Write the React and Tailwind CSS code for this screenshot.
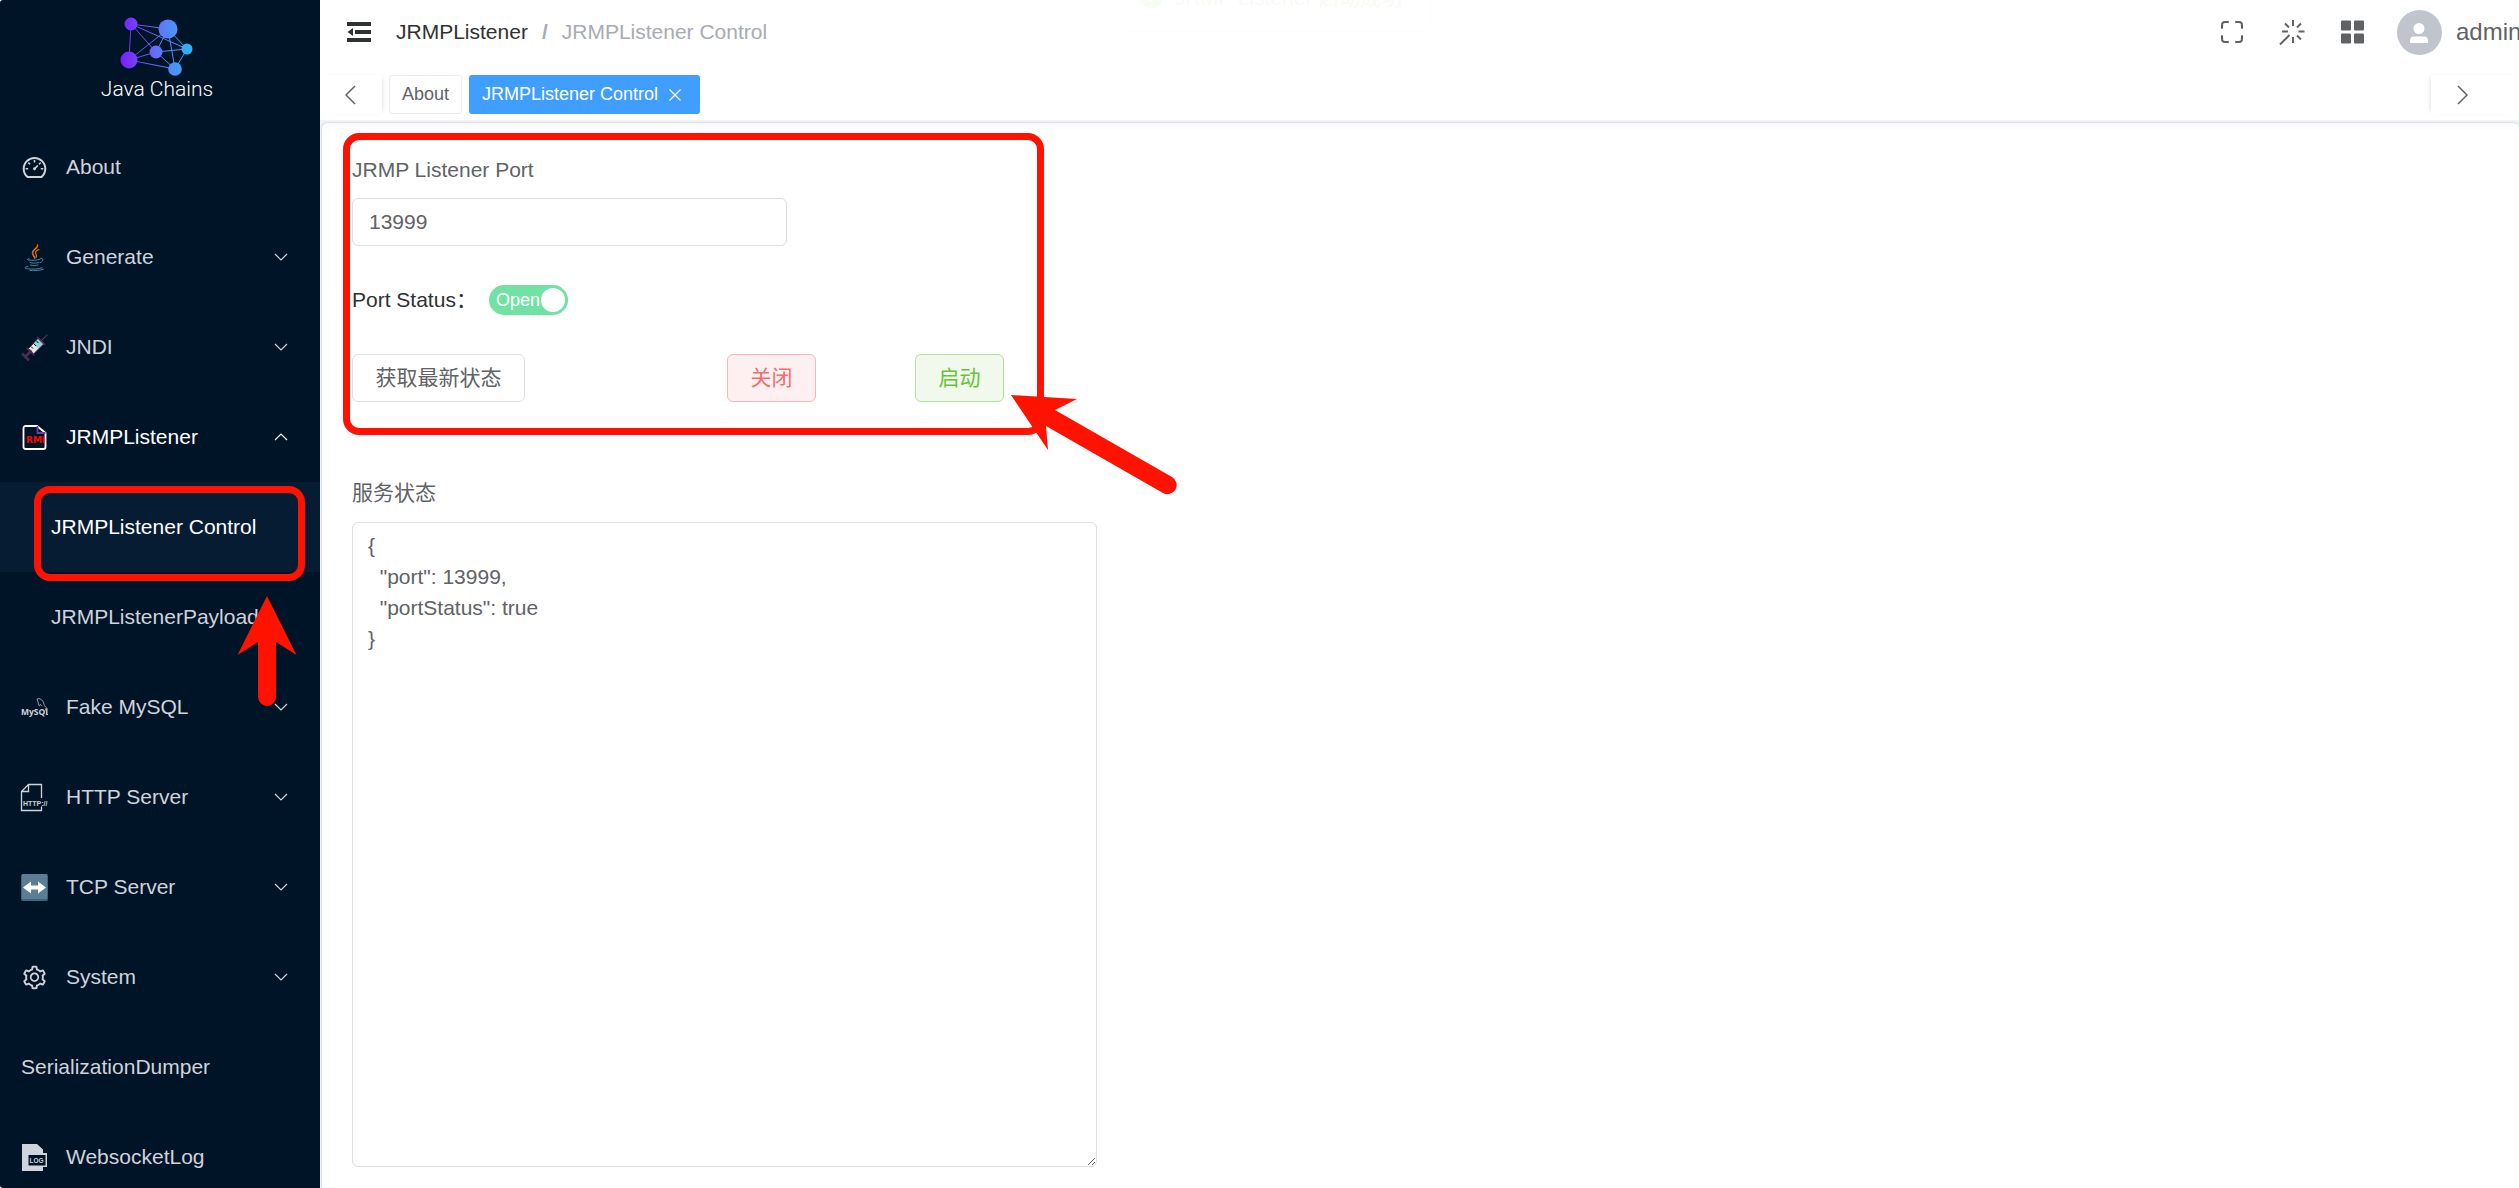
import { useState } from 'react';
import { AiOutlineDashboard, AiOutlineSetting } from 'react-icons/ai';

const JavaIcon = () => (
  <svg viewBox="0 0 27 27" className="h-[27px] w-[27px]" fill="none" strokeLinecap="round">
    <path d="M16.5 1c.8 3-5 4.600-5 8 0 2 1.800 3 2.300 5" stroke="#e76f00" strokeWidth="1.500" />
    <path d="M18 5.500c-2.500 1-3.800 2.300-3.300 4 .5 1.400 1.300 2.300.3 4" stroke="#e76f00" strokeWidth="1.200" />
    <path d="M8 14.500c-2 .6-2.500 1.300 0 1.600 3.500.4 8 .2 11-.8M19.500 14.300c3-.6 3.800 2.500-.3 4.300M9 18.500c2.500.9 6 .8 9 0M9.500 21c2.500.8 5 .7 7.500 0M7 22.500c-3.500.6-4.500 1.800-.5 2.300 5 .6 11.500.4 14.500-1M9 26.500c5 .4 10 0 13.500-1.300" stroke="#5382a1" strokeWidth="1" />
  </svg>
);

const SyringeIcon = () => (
  <svg viewBox="0 0 27 27" className="h-[27px] w-[27px]" fill="none">
    <path d="M20 7l6.500-6.500" stroke="#4b2f52" strokeWidth="1.200" />
    <path d="M7.500 14.500L17.500 4l5.500 5.500-10.500 10.500z" fill="#e8e6ea" stroke="#4b2f52" />
    <path d="M12.500 10L18 4.500l4.500 4.500-5.500 5.500z" fill="#8fd3d6" />
    <path d="M10 12.500l2 2M12.500 9.500l2.500 2.500M15.500 7l2 2" stroke="#001427" />
    <path d="M10.500 16.500l-7 7M1 19.500l7 7" stroke="#4b2f52" strokeWidth="2.500" />
    <path d="M5.500 14l8 7.500M16 3l8 8" stroke="#4b2f52" strokeWidth="1.500" />
  </svg>
);

const RmiIcon = () => (
  <svg viewBox="0 0 27 27" className="h-[27px] w-[27px]" fill="none">
    <path d="M4.500 2h11.500l8.500 7v14a2 2 0 0 1-2 2h-18a2 2 0 0 1-2-2v-19a2 2 0 0 1 2-2z" stroke="#fff" strokeWidth="1.800" />
    <path d="M16.500 2v7h8" stroke="#6b3fa0" strokeWidth="1.800" />
    <text x="5" y="18.500" fontSize="9" fontWeight="700" fontFamily="DejaVu Sans, sans-serif" fill="#ff0000">RMI</text>
  </svg>
);

const MysqlIcon = () => (
  <svg viewBox="0 0 27 27" className="h-[27px] w-[27px]" fill="none">
    <path d="M16 5c2-1 4.500 0 6 2.500 1 2 1 4 2.500 5.500l1.800 1.500-2 .3 1 2.200M16 5c.3 1.800 1.300 2.500 1.300 4 0 1.700.5 2.800 1.200 2.800l.8-1.500 1.700 2" stroke="currentColor" strokeWidth="0.700" />
    <text x="0" y="20.500" fontSize="8.500" fontWeight="700" fontFamily="Open Sans, sans-serif" fill="currentColor">MySQL</text>
  </svg>
);

const HttpIcon = () => (
  <svg viewBox="0 0 27 27" className="h-[27px] w-[27px] overflow-visible" fill="none">
    <path d="M20.500 14v-13.500h-13l-7 7v19h20v-4M7.500.5v7h-7" stroke="currentColor" strokeWidth="1.300" />
    <text x="2" y="21.500" fontSize="7" fontWeight="700" fontFamily="Liberation Sans, sans-serif" fill="currentColor">HTTP://</text>
  </svg>
);

const TcpIcon = () => (
  <svg viewBox="0 0 27 27" className="h-[27px] w-[27px]">
    <rect width="27" height="27" rx="2" fill="#3b657d" />
    <rect x="1" width="25" height="25" rx="1" fill="#5b7e94" />
    <path d="M2 13.500l8-6v4h7v-4l8 6-8 6v-4h-7v4z" fill="#fff" />
  </svg>
);

const LogIcon = () => (
  <svg viewBox="0 0 27 27" className="h-[27px] w-[27px]">
    <path d="M1 0h15l6 5.500v3.500h4v14h-4v4h-21z" fill="currentColor" />
    <rect x="7.500" y="11" width="17" height="10.500" fill="#001427" />
    <text x="8.500" y="19" fontSize="6.500" fontWeight="700" fontFamily="Liberation Sans, sans-serif" fill="currentColor">LOG</text>
  </svg>
);

const Chevron = ({ up }) => (
  <svg viewBox="0 0 14 8" className="h-2 w-3.5" fill="none" stroke="currentColor" strokeWidth="1.200">
    <path d={up ? 'M1 7l6-6 6 6' : 'M1 1l6 6 6-6'} />
  </svg>
);

const Logo = () => (
  <svg viewBox="0 0 76 62" className="h-[62px] w-[76px]">
    <defs>
      <linearGradient id="chain" gradientUnits="userSpaceOnUse" x1="2" y1="0" x2="74" y2="0">
        <stop offset="0" stopColor="#7a1fff" />
        <stop offset="0.500" stopColor="#6670fa" />
        <stop offset="1" stopColor="#2bb8f5" />
      </linearGradient>
    </defs>
    <path d="M12 9L49 14L68 34L37 37L12 9L10 45L49 14L56 54L10 45L37 37L49 14M12 9L68 34L56 54L37 37" fill="none" stroke="url(#chain)" />
    <g fill="url(#chain)">
      <circle cx="12" cy="9" r="6.500" />
      <circle cx="49" cy="14" r="9.500" />
      <circle cx="10" cy="45" r="8.500" />
      <circle cx="37" cy="37" r="6.500" />
      <circle cx="68" cy="34" r="5.500" />
      <circle cx="56" cy="54" r="6.800" />
    </g>
  </svg>
);

const menu = [
  { label: 'About', icon: <AiOutlineDashboard size={27} /> },
  { label: 'Generate', icon: <JavaIcon />, group: true },
  { label: 'JNDI', icon: <SyringeIcon />, group: true },
  {
    label: 'JRMPListener',
    icon: <RmiIcon />,
    group: true,
    open: true,
    children: ['JRMPListener Control', 'JRMPListenerPayload'],
  },
  { label: 'Fake MySQL', icon: <MysqlIcon />, group: true },
  { label: 'HTTP Server', icon: <HttpIcon />, group: true },
  { label: 'TCP Server', icon: <TcpIcon />, group: true },
  { label: 'System', icon: <AiOutlineSetting size={27} />, group: true },
  { label: 'SerializationDumper' },
  { label: 'WebsocketLog', icon: <LogIcon /> },
];

const Sidebar = () => (
  <aside className="relative flex w-80 shrink-0 flex-col overflow-hidden rounded-l-[3px] bg-[#001427] text-[#cfd3dc]">
    <div className="flex h-[122px] shrink-0 flex-col items-center pt-[15px] pr-1.5">
      <Logo />
      <span className="font-[Roboto,sans-serif] text-[21px] leading-6 font-light text-white">Java Chains</span>
    </div>
    <nav>
      <ul>
        {menu.map((item) => (
          <li key={item.label}>
            <a
              href="#"
              className={`flex h-[90px] items-center gap-[18px] pr-8 pl-[21px] ${item.open ? 'text-white' : ''}`}
            >
              {item.icon}
              <span className="flex-1">{item.label}</span>
              {item.group && <Chevron up={item.open} />}
            </a>
            {item.children && (
              <ul>
                {item.children.map((child, i) => (
                  <li key={child}>
                    <a
                      href="#"
                      className={`flex h-[90px] items-center pl-[51px] ${i === 0 ? 'bg-[#051c33] text-white' : ''}`}
                    >
                      {child}
                    </a>
                  </li>
                ))}
              </ul>
            )}
          </li>
        ))}
      </ul>
    </nav>
    <div className="absolute top-[486px] left-[34px] h-[95px] w-[271px] rounded-[16px] border-7 border-[#ff1200]" />
    <svg viewBox="0 0 60 112" className="absolute top-[595px] left-[237px] h-28 w-[60px]" fill="#ff1200">
      <path d="M30 1L59.500 60L39 47v55a9 9 0 0 1-18 0V47L.5 60z" />
    </svg>
  </aside>
);

const Header = () => (
  <header className="h-[120px] shrink-0 bg-white">
    <div className="flex h-16 items-center">
      <button aria-label="Collapse menu" className="ml-[26px] text-[#303133]">
        <svg viewBox="0 0 26 26" className="h-[26px] w-[26px]" fill="currentColor">
          <path d="M1 3h24v4H1zM9 11h16v4H9zM1 19h24v4H1zM1.500 13l5.500-4v8z" />
        </svg>
      </button>
      <nav className="ml-6 flex gap-3.5 text-[#a8abb2]">
        <a href="#" className="text-[#303133]">JRMPListener</a>
        <span className="font-bold">/</span>
        <span>JRMPListener Control</span>
      </nav>
      <div className="ml-auto flex items-center text-[#606266]">
        <button aria-label="Fullscreen">
          <svg viewBox="0 0 24 24" className="h-6 w-6" fill="none" stroke="currentColor" strokeWidth="2">
            <path d="M2 8V5a3 3 0 0 1 3-3h3M16 2h3a3 3 0 0 1 3 3v3M22 16v3a3 3 0 0 1-3 3h-3M8 22H5a3 3 0 0 1-3-3v-3" strokeLinecap="round" />
          </svg>
        </button>
        <button aria-label="Theme" className="ml-[35px]">
          <svg viewBox="0 0 26 26" className="h-[26px] w-[26px]" fill="none" stroke="currentColor" strokeWidth="2">
            <path d="M14 1v6M14 18v6M3 12.500h6M19.500 12.500h6M6 4.500l4 4M22 4.500l-4 4M18 16.500l4 4M1 25.500l9.500-9.500" />
          </svg>
        </button>
        <button aria-label="Apps" className="ml-[35px]">
          <svg viewBox="0 0 24 24" className="h-6 w-6" fill="currentColor">
            <rect x="1" y="0.500" width="10" height="10" rx="1" />
            <rect x="14" y="0.500" width="10" height="10" rx="1" />
            <rect x="1" y="13.500" width="10" height="10" rx="1" />
            <rect x="14" y="13.500" width="10" height="10" rx="1" />
          </svg>
        </button>
        <button className="ml-[33px] flex items-center">
          <svg viewBox="0 0 45 45" className="h-[45px] w-[45px]">
            <circle cx="22.500" cy="22.500" r="22.500" fill="#c0c4cc" />
            <circle cx="22" cy="18.500" r="5.500" fill="#fff" />
            <path d="M13 33v-2.500a4 4 0 0 1 4-4h10a4 4 0 0 1 4 4v2.500z" fill="#fff" />
          </svg>
          <span className="ml-3.5 w-[63px] overflow-hidden text-left text-2xl whitespace-nowrap">admin</span>
        </button>
      </div>
    </div>
    <div className="flex h-14 items-end pb-1.5 text-[18px]">
      <button
        aria-label="Scroll left"
        className="flex h-[39px] w-[62px] items-center pl-[25px] text-[#606266] shadow-[3px_0_5px_-3px_#d8d8d8]"
      >
        <svg viewBox="0 0 11 20" className="h-5 w-[11px]" fill="none" stroke="currentColor" strokeWidth="1.500">
          <path d="M10 1L1 10l9 9" />
        </svg>
      </button>
      <a
        href="#"
        className="ml-[7px] flex h-[39px] items-center rounded-[3px] border border-[#e9ebf0] px-3 text-[#606266]"
      >
        About
      </a>
      <div className="ml-[7px] flex h-[39px] items-center rounded-[3px] bg-[#409eff] pr-[19px] pl-[13px] text-white">
        <a href="#">JRMPListener Control</a>
        <button aria-label="Close tab" className="ml-[11px]">
          <svg viewBox="0 0 12 12" className="h-3 w-3" fill="none" stroke="currentColor" strokeWidth="1.200">
            <path d="M.5.5l11 11M11.500.5l-11 11" />
          </svg>
        </button>
      </div>
      <button
        aria-label="Scroll right"
        className="ml-auto flex h-[39px] w-[88px] items-center pl-[26px] text-[#606266] shadow-[-3px_0_5px_-3px_#d8d8d8]"
      >
        <svg viewBox="0 0 11 20" className="h-5 w-[11px]" fill="none" stroke="currentColor" strokeWidth="1.500">
          <path d="M1 1l9 9-9 9" />
        </svg>
      </button>
    </div>
  </header>
);

const status = `{
  "port": 13999,
  "portStatus": true
}`;

const ListenerControl = () => {
  const [port, setPort] = useState('13999');
  const [isOpen, setIsOpen] = useState(true);

  return (
    <main className="mt-0.5 ml-px flex flex-1 flex-col items-start rounded-t-md border-t border-l border-[#dcdfe6] bg-linear-to-b from-[#f9f9fa] to-white to-[8px] pt-[31px] pb-[21px] pl-[30px] text-[#606266]">
      <label htmlFor="port" className="leading-8">
        JRMP Listener Port
      </label>
      <input
        id="port"
        value={port}
        onChange={(e) => setPort(e.target.value)}
        className="mt-3 h-12 w-[435px] rounded-md border border-[#dcdfe6] bg-white px-4 outline-none"
      />
      <div className="mt-[39px] flex h-[30px] items-center text-[#303133]">
        <label htmlFor="portStatus">Port Status：</label>
        <label className="ml-3 flex h-[30px] w-[79px] items-center rounded-full bg-[#71e2a3] pr-[3px] pl-[7px] text-[18px] text-white">
          <input
            id="portStatus"
            type="checkbox"
            role="switch"
            checked={isOpen}
            onChange={() => setIsOpen(!isOpen)}
            className="sr-only"
          />
          Open
          <span className="ml-auto h-6 w-6 shrink-0 rounded-full bg-white" />
        </label>
      </div>
      <div className="mt-[39px] flex">
        <button className="h-12 w-[173px] rounded-md border border-[#dcdfe6] bg-white">获取最新状态</button>
        <button className="ml-[202px] h-12 w-[89px] rounded-md border border-[#fab6b6] bg-[#fef0f0] text-[#f56c6c]">
          关闭
        </button>
        <button className="ml-[99px] h-12 w-[89px] rounded-md border border-[#b3e19d] bg-[#f0f9eb] text-[#67c23a]">
          启动
        </button>
      </div>
      <label htmlFor="status" className="mt-[75px] leading-8">
        服务状态
      </label>
      <textarea
        id="status"
        defaultValue={status}
        className="mt-[13px] w-[745px] flex-1 resize rounded-md border border-[#dcdfe6] bg-white px-[15px] py-[7px] leading-[31px] outline-none"
      />
    </main>
  );
};

const Toast = () => (
  <div className="absolute -top-9 left-[1122px] flex h-[68px] items-center rounded-md border border-[#e1f3d8] bg-white pr-7 pl-[18px] text-[#67c23a] opacity-5">
    <svg viewBox="0 0 22 22" className="h-[22px] w-[22px]">
      <circle cx="11" cy="11" r="10.500" fill="currentColor" />
      <path d="M6 11l3.500 3.500 6.500-7" fill="none" stroke="#fff" strokeWidth="2" />
    </svg>
    <span className="ml-3">JRMP Listener 启动成功</span>
  </div>
);

const App = () => {
  return (
    <div className="relative flex h-screen overflow-hidden bg-white font-['Liberation_Sans','Noto_Sans_CJK_SC',sans-serif] text-[21px]">
      <Sidebar />
      <div className="flex min-w-0 flex-1 flex-col bg-[#f0f2f5]">
        <Header />
        <ListenerControl />
      </div>
      <Toast />
      <div className="absolute top-[133px] left-[343px] h-[302px] w-[701px] rounded-[16px] border-7 border-[#ff1200]" />
      <svg viewBox="0 0 168 104" className="absolute top-[393px] left-[1010px] h-[104px] w-[168px]" fill="#ff1200">
        <path d="M1 2L67 6L45 17L162 84A9 9 0 0 1 153 100L36 33L38 57z" />
      </svg>
    </div>
  );
};

export default App;
